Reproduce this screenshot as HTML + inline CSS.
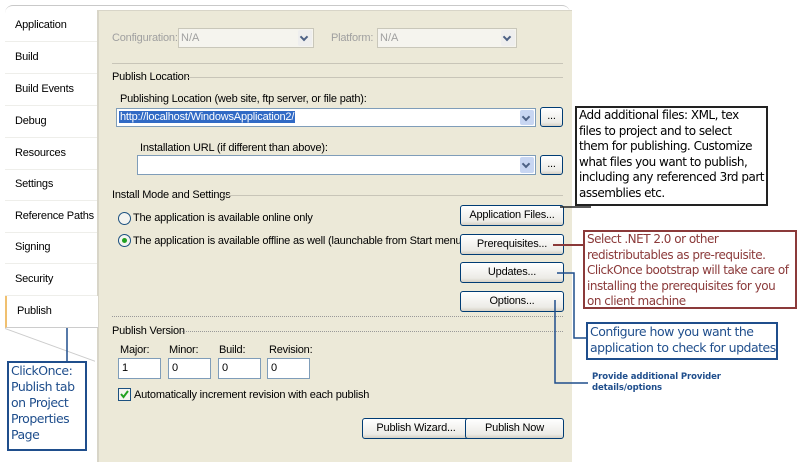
<!DOCTYPE html>
<html><head><meta charset="utf-8"><style>
body{margin:0;width:800px;height:461px;background:#fff;position:relative;overflow:hidden;font-family:"Liberation Sans",Arial,sans-serif;font-size:11px;color:#000}
.a{position:absolute}
.tab{position:absolute;left:5px;width:92px;height:31px;border-bottom:1px solid #eeeeea;font-size:11px;letter-spacing:-0.2px}
.tab span{position:absolute;left:10px;top:9px;white-space:nowrap}
.panel{position:absolute;left:97px;top:10px;width:473px;height:451px;background:#ece9d8;border-left:2px solid #d8d5c8;border-top:1px solid #d8d5c8}
.lbl{position:absolute;font-size:11px;letter-spacing:-0.2px;white-space:nowrap}
.line{position:absolute;height:1px;background:#c8c5b8}
.inp{position:absolute;background:#fff;border:1px solid #7f9db9;box-sizing:border-box}
.dd{position:absolute;width:14px;top:1px;bottom:1px;right:1px;background:#c8d6f2;border-radius:2px}
.dd:after{content:"";position:absolute;left:3px;top:4px;width:4px;height:4px;border-right:2px solid #4d6185;border-bottom:2px solid #4d6185;transform:rotate(45deg)}
.btn{position:absolute;border:1px solid #003c74;border-radius:3px;background:linear-gradient(#fff,#ecebe6 80%,#d6d0c5);box-sizing:border-box;text-align:center;font-size:11px;letter-spacing:-0.2px;line-height:18px;white-space:nowrap}
.note{position:absolute;font-family:"DejaVu Sans",Verdana,sans-serif;font-size:12px;line-height:15.5px;box-sizing:border-box;padding:0 2px;letter-spacing:-0.5px}
</style></head><body>
<div class="a" style="left:5px;top:5px;width:565px;height:10px;border-top:1px solid #c9c9c9;border-radius:8px 8px 0 0"></div>
<div class="tab" style="top:10px"><span>Application</span></div>
<div class="tab" style="top:42px"><span>Build</span></div>
<div class="tab" style="top:74px"><span>Build Events</span></div>
<div class="tab" style="top:106px"><span>Debug</span></div>
<div class="tab" style="top:138px"><span>Resources</span></div>
<div class="tab" style="top:169px"><span>Settings</span></div>
<div class="tab" style="top:201px"><span>Reference Paths</span></div>
<div class="tab" style="top:232px"><span>Signing</span></div>
<div class="tab" style="top:264px"><span>Security</span></div>
<div class="tab" style="top:296px;border-left:2px solid #f0c070;border-bottom:1px solid #ccc;width:91px;z-index:2;background:#fff"><span>Publish</span></div>
<div class="a" style="left:5px;top:328px;width:90px;height:60px;border-top:1px solid #ccc;transform:skewY(20deg);transform-origin:0 0"></div>
<div class="panel"></div>
<div class="lbl" style="left:112px;top:32px;color:#a0a0a0">Configuration:</div>
<div class="inp" style="left:178px;top:28px;width:136px;height:20px;background:#f5f4ee;border-color:#c9c7ba;color:#a0a0a0;padding:3px 2px">N/A<div class="dd" style="background:#eee"></div></div>
<div class="lbl" style="left:331px;top:32px;color:#a0a0a0">Platform:</div>
<div class="inp" style="left:377px;top:28px;width:140px;height:20px;background:#f5f4ee;border-color:#c9c7ba;color:#a0a0a0;padding:3px 2px">N/A<div class="dd" style="background:#eee"></div></div>
<div class="line" style="left:112px;top:63px;width:451px"></div>
<div class="lbl" style="left:112px;top:71px">Publish Location</div>
<div class="line" style="left:187px;top:77px;width:376px"></div>
<div class="lbl" style="left:120px;top:93px">Publishing Location (web site, ftp server, or file path):</div>
<div class="inp" style="left:116px;top:108px;width:420px;height:19px"><span class="a" style="left:2px;top:2px;background:#316ac5;color:#fff;padding:0 1px;letter-spacing:-0.2px">http://localhost/WindowsApplication2/</span><div class="dd"></div></div>
<div class="btn" style="left:540px;top:107px;width:23px;height:20px;line-height:16px">...</div>
<div class="lbl" style="left:140px;top:142px">Installation URL (if different than above):</div>
<div class="inp" style="left:137px;top:155px;width:399px;height:20px"><div class="dd"></div></div>
<div class="btn" style="left:540px;top:155px;width:23px;height:20px;line-height:16px">...</div>
<div class="lbl" style="left:112px;top:189px">Install Mode and Settings</div>
<div class="line" style="left:224px;top:195px;width:339px"></div>
<div class="a" style="left:118px;top:212px;width:11px;height:11px;border:1px solid #1c5180;border-radius:50%;background:#f4f4f0"></div>
<div class="lbl" style="left:133px;top:212px">The application is available online only</div>
<div class="a" style="left:118px;top:234px;width:11px;height:11px;border:1px solid #1c5180;border-radius:50%;background:#f4f4f0"></div>
<div class="a" style="left:122px;top:238px;width:5px;height:5px;border-radius:50%;background:#21a121"></div>
<div class="lbl" style="left:133px;top:235px">The application is available offline as well (launchable from Start menu)</div>
<div class="btn" style="left:460px;top:205px;width:104px;height:21px">Application Files...</div>
<div class="btn" style="left:460px;top:234px;width:104px;height:21px">Prerequisites...</div>
<div class="btn" style="left:460px;top:262px;width:104px;height:21px">Updates...</div>
<div class="btn" style="left:460px;top:291px;width:104px;height:21px">Options...</div>
<div class="a" style="left:112px;top:316px;width:451px;border-top:1px dotted #999"></div>
<div class="lbl" style="left:112px;top:325px">Publish Version</div>
<div class="a" style="left:182px;top:331px;width:381px;border-top:1px dotted #999"></div>
<div class="lbl" style="left:120px;top:344px">Major:</div>
<div class="lbl" style="left:169px;top:344px">Minor:</div>
<div class="lbl" style="left:219px;top:344px">Build:</div>
<div class="lbl" style="left:269px;top:344px">Revision:</div>
<div class="inp" style="left:118px;top:358px;width:43px;height:21px;padding:3px 3px">1</div>
<div class="inp" style="left:168px;top:358px;width:43px;height:21px;padding:3px 3px">0</div>
<div class="inp" style="left:218px;top:358px;width:43px;height:21px;padding:3px 3px">0</div>
<div class="inp" style="left:267px;top:358px;width:43px;height:21px;padding:3px 3px">0</div>
<div class="a" style="left:118px;top:388px;width:11px;height:11px;border:1px solid #1c5180;background:#f4f4f0"></div>
<svg class="a" style="left:119px;top:389px" width="11" height="11"><path d="M2 5 L4.5 8 L9 2" stroke="#21a121" stroke-width="2" fill="none"/></svg>
<div class="lbl" style="left:134px;top:389px">Automatically increment revision with each publish</div>
<div class="btn" style="left:362px;top:418px;width:108px;height:21px">Publish Wizard...</div>
<div class="btn" style="left:465px;top:418px;width:99px;height:21px">Publish Now</div>
<div class="note" style="left:575px;top:106px;width:193px;height:100px;border:2px solid #222;background:#fff;white-space:nowrap;overflow:hidden">Add additional files: XML, tex<br>files to project and to select<br>them for publishing. Customize<br>what files you want to publish,<br>including any referenced 3rd part<br>assemblies etc.</div>
<div class="note" style="left:583px;top:230px;width:214px;height:79px;border:2px solid #8b3a3a;color:#8b3a3a;background:#fff;white-space:nowrap;overflow:hidden">Select .NET 2.0 or other<br>redistributables as pre-requisite.<br>ClickOnce bootstrap will take care of<br>installing the prerequisites for you<br>on client machine</div>
<div class="note" style="left:586px;top:322px;width:192px;height:38px;border:2px solid #1f4e8c;color:#1f4e8c;background:#fff;font-size:12.5px;white-space:nowrap;overflow:hidden">Configure how you want the<br>application to check for updates</div>
<div class="a" style="left:592px;top:372px;font-family:'DejaVu Sans',sans-serif;font-size:8.5px;font-weight:bold;color:#1f4e8c;line-height:11px;letter-spacing:-0.1px">Provide additional Provider<br>details/options</div>
<div class="note" style="left:7px;top:361px;width:80px;height:90px;border:2px solid #1f4e8c;color:#1f4e8c;background:#fff;font-size:12.5px;line-height:16px;white-space:nowrap;overflow:hidden">ClickOnce:<br>Publish tab<br>on Project<br>Properties<br>Page</div>
<svg class="a" style="left:0;top:0" width="800" height="461">
<path d="M560 207 H591" stroke="#222" stroke-width="1.5"/>
<path d="M553 245 H584" stroke="#8b3a3a" stroke-width="2"/>
<path d="M557 273 H574 V338 H587" stroke="#1f4e8c" stroke-width="1.5" fill="none"/>
<path d="M555 300 V383 H588" stroke="#1f4e8c" stroke-width="1.5" fill="none"/>
<path d="M67 317 V361" stroke="#1f4e8c" stroke-width="1.5"/>
</svg>
</body></html>
